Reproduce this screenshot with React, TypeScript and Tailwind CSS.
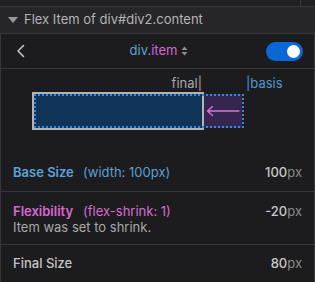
import React from 'react';

const Row = ({ children, last }: { children: React.ReactNode; last?: boolean }) => (
  <div className={`px-[12px] ${last ? '' : 'border-b border-[#38383a]'}`}>{children}</div>
);

const Value = ({ num }: { num: string }) => (
  <span className="text-[13px]">
    <span className="text-[#c8c8c8] font-medium">{num}</span>
    <span className="text-[#8a8a8a]">px</span>
  </span>
);

export default function App() {
  return (
    <div
      className="w-[315px] h-[282px] overflow-hidden bg-[#1c1c1e] flex flex-col"
      style={{ fontFamily: 'Inter, "Noto Sans", sans-serif' }}
    >
      {/* top strip */}
      <div className="h-[7px] bg-[#202022] border-b border-[#38383a] flex justify-end shrink-0">
        <div className="w-px bg-[#3a3a3c] mr-[14px]" />
      </div>

      {/* section header */}
      <div className="h-[27px] bg-[#262628] border-b border-[#38383a] flex items-center pl-[8px] gap-[6px] shrink-0">
        <svg width="10" height="6" viewBox="0 0 10 6">
          <path d="M0 0 L10 0 L5 6 Z" fill="#9a9a9c" />
        </svg>
        <span className="text-[13px] text-[#b4b4b6]">Flex Item of div#div2.content</span>
      </div>

      <div className="flex-1 border-l border-r border-[#38383a] flex flex-col">
        {/* selector row */}
        <div className="h-[35px] border-b border-[#38383a] flex items-center justify-between pl-[15px] pr-[11px] shrink-0">
          <svg width="10" height="14" viewBox="0 0 10 14" fill="none">
            <path d="M7.5 1.5 L2 7 L7.5 12.5" stroke="#c8c8c8" strokeWidth="1.5" strokeLinecap="round" strokeLinejoin="round" />
          </svg>
          <div className="flex items-center gap-[4px] ml-[26px] text-[13px]">
            <span>
              <span className="text-[#5aa2d8]">div</span>
              <span className="text-[#d366d3]">.item</span>
            </span>
            <svg width="7" height="10" viewBox="0 0 7 10">
              <path d="M3.5 0.5 L6.5 4 L0.5 4 Z M0.5 6 L6.5 6 L3.5 9.5 Z" fill="#8e8e90" />
            </svg>
          </div>
          <div className="w-[37px] h-[19px] rounded-full bg-[#0a68d6] flex items-center justify-end pr-[3px]">
            <div className="w-[13px] h-[13px] rounded-full bg-white" />
          </div>
        </div>

        {/* diagram */}
        <div className="h-[86px] pt-[6px] shrink-0">
          <div className="relative h-[16px] text-[13px] leading-[16px]">
            <span className="absolute right-[112px] top-0 text-[#a6a6a8]">final|</span>
            <span className="absolute left-[245px] top-0 text-[#4f9ad4]">|basis</span>
          </div>
          <div className="relative ml-[31px] mt-[1px] h-[38px] w-[212px]">
            <div className="absolute left-0 top-0 h-[38px] w-[172px] border-2 border-[#b3b3b5] bg-[#0f3458]" />
            <div className="absolute left-[172px] top-[2px] h-[34px] w-[38px] bg-[#35264f] flex items-center pl-[2px]">
              <svg width="34" height="12" viewBox="0 0 34 12" fill="none">
                <path d="M1.5 6 L33 6 M6.5 1.5 L1.5 6 L6.5 10.5" stroke="#d37ad6" strokeWidth="1.3" strokeLinecap="round" strokeLinejoin="round" />
              </svg>
            </div>
            <div className="absolute left-[2px] top-[2px] h-[34px] w-[210px] border-2 border-dotted border-[#3a86d8]" />
          </div>
        </div>

        {/* rows */}
        <Row>
          <div className="h-[36px] flex items-center justify-between">
            <div className="flex items-center text-[13px]">
              <span className="w-[70px] font-semibold text-[#5ba2da]">Base Size</span>
              <span className="text-[#5b9fd4]">(width: 100px)</span>
            </div>
            <Value num="100" />
          </div>
        </Row>
        <Row>
          <div className="h-[52px] pt-[11px]">
            <div className="flex items-center justify-between text-[13px] leading-[16px]">
              <div className="flex items-center">
                <span className="w-[70px] font-semibold text-[#d868d2]">Flexibility</span>
                <span className="text-[#d66bd2]">(flex-shrink: 1)</span>
              </div>
              <Value num="-20" />
            </div>
            <div className="text-[13px] leading-[16px] text-[#a8a8aa]">Item was set to shrink.</div>
          </div>
        </Row>
        <Row last>
          <div className="h-[38px] flex items-center justify-between">
            <span className="text-[13px] font-medium text-[#c4c4c6]">Final Size</span>
            <Value num="80" />
          </div>
        </Row>
      </div>
    </div>
  );
}
